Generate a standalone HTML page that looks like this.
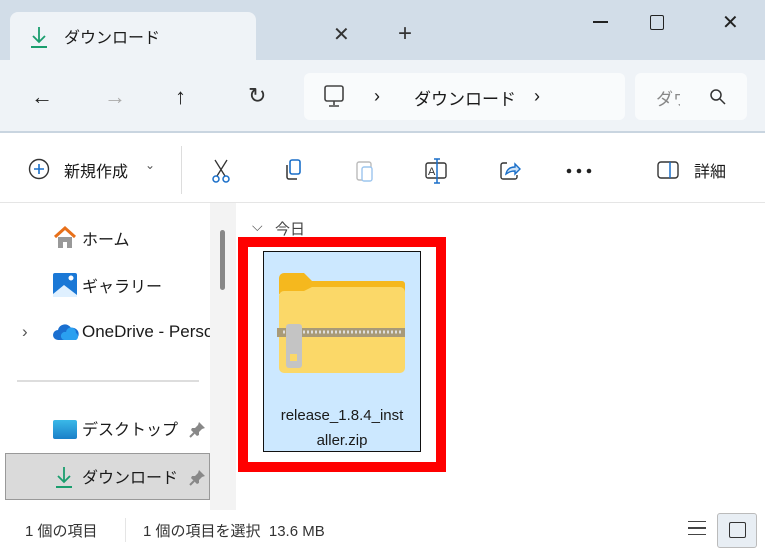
<!DOCTYPE html><html><head><meta charset="utf-8"><style>
*{margin:0;padding:0;box-sizing:border-box}
body{width:765px;height:552px;overflow:hidden;font-family:"Liberation Sans","Noto Sans CJK JP",sans-serif;color:#1a1a1a;background:#fff;position:relative}
.a{position:absolute;white-space:nowrap}
</style></head><body>
<div class="a" style="left:0;top:0;width:765px;height:60px;background:#d2dde8"></div>
<div class="a" style="left:10px;top:12px;width:246px;height:50px;background:#eff3f7;border-radius:8px 8px 0 0"></div>
<svg class="a" style="left:28px;top:24px" width="22" height="26"><path d="M11 3v15M5 12l6 6 6-6" stroke="#1a9e6e" stroke-width="1.8" fill="none"/><path d="M3 23h16" stroke="#1a9e6e" stroke-width="2"/></svg>
<div class="a" style="left:64px;top:24px;font-size:16px">ダウンロード</div>
<div class="a" style="left:333px;top:22px;font-size:20px;color:#333">✕</div>
<div class="a" style="left:398px;top:20px;font-size:24px;color:#333">+</div>
<div class="a" style="left:593px;top:21px;width:15px;height:1.5px;background:#222"></div>
<div class="a" style="left:650px;top:15px;width:14px;height:15px;border:1.5px solid #222;border-radius:2px"></div>
<div class="a" style="left:722px;top:10px;font-size:20px;color:#222">✕</div>
<div class="a" style="left:0;top:60px;width:765px;height:72px;background:#eff3f7"></div>
<div class="a" style="left:0;top:131px;width:765px;height:2px;background:#c9d5e0"></div>
<div class="a" style="left:31px;top:84px;font-size:22px;color:#222">←</div>
<div class="a" style="left:104px;top:84px;font-size:22px;color:#aaa">→</div>
<div class="a" style="left:175px;top:84px;font-size:22px;color:#222">↑</div>
<div class="a" style="left:248px;top:83px;font-size:22px;color:#333">↻</div>
<div class="a" style="left:304px;top:73px;width:321px;height:47px;background:#f9fbfc;border-radius:6px"></div>
<svg class="a" style="left:322px;top:84px" width="26" height="26"><rect x="3" y="2" width="18" height="15" rx="2" stroke="#444" stroke-width="1.6" fill="none"/><path d="M12 17v4M7 22h10" stroke="#444" stroke-width="1.6"/></svg>
<div class="a" style="left:374px;top:86px;font-size:18px">›</div>
<div class="a" style="left:414px;top:85px;font-size:17px">ダウンロード</div>
<div class="a" style="left:534px;top:86px;font-size:18px">›</div>
<div class="a" style="left:635px;top:73px;width:112px;height:47px;background:#f9fbfc;border-radius:6px"></div>
<div class="a" style="left:656px;top:85px;font-size:17px;color:#888;width:24px;overflow:hidden">ダウ</div>
<svg class="a" style="left:709px;top:88px" width="18" height="18"><circle cx="7" cy="7" r="5" stroke="#333" stroke-width="1.5" fill="none"/><path d="M11 11l5 5" stroke="#333" stroke-width="1.5"/></svg>
<svg class="a" style="left:28px;top:158px" width="24" height="24"><circle cx="11" cy="11" r="9.5" stroke="#333" stroke-width="1.4" fill="none"/><path d="M11 6v10M6 11h10" stroke="#1a6fc9" stroke-width="1.6"/></svg>
<div class="a" style="left:64px;top:158px;font-size:16px">新規作成</div>
<div class="a" style="left:145px;top:158px;font-size:12px;color:#555">⌄</div>
<div class="a" style="left:181px;top:146px;width:1px;height:48px;background:#ddd"></div>
<svg class="a" style="left:209px;top:158px" width="26" height="26"><path d="M6 2l10 16M18 2L8 18" stroke="#333" stroke-width="1.3"/><circle cx="7" cy="21" r="3" stroke="#1a6fc9" stroke-width="1.5" fill="none"/><circle cx="17" cy="21" r="3" stroke="#1a6fc9" stroke-width="1.5" fill="none"/></svg>
<svg class="a" style="left:282px;top:158px" width="24" height="24"><rect x="8" y="2" width="10" height="14" rx="2" stroke="#1a6fc9" stroke-width="1.6" fill="none"/><path d="M5 7v12a2 2 0 0 0 2 2h8" stroke="#333" stroke-width="1.5" fill="none"/></svg>
<svg class="a" style="left:354px;top:158px" width="24" height="26"><rect x="3" y="4" width="14" height="18" rx="2" stroke="#bbb" stroke-width="1.4" fill="none"/><rect x="8" y="9" width="10" height="14" rx="2" stroke="#9cc5ee" stroke-width="1.4" fill="#fff"/></svg>
<svg class="a" style="left:424px;top:157px" width="26" height="28"><rect x="2" y="6" width="20" height="15" rx="2" stroke="#333" stroke-width="1.4" fill="none"/><path d="M13 2v24M10 2h6M10 26h6" stroke="#1a6fc9" stroke-width="1.5"/><text x="4" y="18" font-size="11" fill="#333" font-family="Liberation Sans">A</text></svg>
<svg class="a" style="left:498px;top:158px" width="26" height="26"><path d="M9 5H5a2 2 0 0 0-2 2v12a2 2 0 0 0 2 2h12a2 2 0 0 0 2-2v-2" stroke="#333" stroke-width="1.4" fill="none"/><path d="M8 16c1-5 4-7 9-7V6l5 5-5 5v-3c-4 0-6 1-9 3z" stroke="#1a6fc9" stroke-width="1.4" fill="#cfe3f7"/></svg>
<svg class="a" style="left:566px;top:168px" width="28" height="6"><circle cx="3" cy="3" r="2.3" fill="#222"/><circle cx="13" cy="3" r="2.3" fill="#222"/><circle cx="23" cy="3" r="2.3" fill="#222"/></svg>
<svg class="a" style="left:656px;top:160px" width="26" height="20"><rect x="2" y="2" width="20" height="16" rx="3" stroke="#333" stroke-width="1.4" fill="none"/><path d="M14 2v16" stroke="#1a6fc9" stroke-width="1.5"/></svg>
<div class="a" style="left:694px;top:158px;font-size:16px">詳細</div>
<div class="a" style="left:0;top:202px;width:765px;height:1px;background:#e5e5e5"></div>
<div class="a" style="left:210px;top:203px;width:26px;height:307px;background:#f3f3f3"></div>
<div class="a" style="left:220px;top:230px;width:5px;height:60px;background:#888;border-radius:3px"></div>
<svg class="a" style="left:52px;top:225px" width="26" height="26"><path d="M3 12L13 3l10 9" stroke="#e8701a" stroke-width="3" fill="none"/><path d="M6 12v11h5v-6h4v6h5V12" fill="#999"/></svg>
<div class="a" style="left:82px;top:226px;font-size:16px">ホーム</div>
<svg class="a" style="left:52px;top:272px" width="26" height="26"><rect x="1" y="1" width="24" height="24" rx="2" fill="#1a78d6"/><path d="M1 22l11-9 13 10v2H1z" fill="#dff0ff"/><circle cx="19" cy="6" r="2.5" fill="#fff"/></svg>
<div class="a" style="left:82px;top:273px;font-size:16px">ギャラリー</div>
<div class="a" style="left:22px;top:322px;font-size:17px;color:#555">›</div>
<svg class="a" style="left:52px;top:320px" width="28" height="22"><path d="M6 20a5 5 0 0 1 0-10 7 7 0 0 1 13-2 6 6 0 0 1 3 12z" fill="#1a6fd0"/><path d="M12 20a4 4 0 0 1 2-8 5 5 0 0 1 10 1 4 4 0 0 1 0 7z" fill="#2aa0f0"/></svg>
<div class="a" style="left:82px;top:322px;font-size:17px;width:128px;overflow:hidden">OneDrive - Personal</div>
<div class="a" style="left:17px;top:380px;width:182px;height:2px;background:#ddd"></div>
<div class="a" style="left:53px;top:420px;width:24px;height:19px;background:linear-gradient(#3ab8e8,#1a7fc8);border-radius:2px"></div>
<div class="a" style="left:82px;top:416px;font-size:16px">デスクトップ</div>
<svg class="a" style="left:189px;top:420px" width="18" height="18"><path d="M10 2l6 6-3 1-3 3v3l-2 1-6-6 1-2h3l3-3z" fill="#888"/><path d="M5 13l-4 4" stroke="#888" stroke-width="2"/></svg>
<div class="a" style="left:5px;top:453px;width:205px;height:47px;background:#dadada;border:1px solid #999"></div>
<svg class="a" style="left:53px;top:464px" width="22" height="26"><path d="M11 3v15M5 12l6 6 6-6" stroke="#1a9e6e" stroke-width="1.8" fill="none"/><path d="M3 23h16" stroke="#1a9e6e" stroke-width="2"/></svg>
<div class="a" style="left:82px;top:464px;font-size:16px">ダウンロード</div>
<svg class="a" style="left:189px;top:468px" width="18" height="18"><path d="M10 2l6 6-3 1-3 3v3l-2 1-6-6 1-2h3l3-3z" fill="#888"/><path d="M5 13l-4 4" stroke="#888" stroke-width="2"/></svg>
<div class="a" style="left:252px;top:218px;font-size:14px;color:#555">⌵</div>
<div class="a" style="left:275px;top:218px;font-size:15px;color:#444">今日</div>
<div class="a" style="left:238px;top:237px;width:208px;height:235px;border:10px solid #f00;background:#fff"></div>
<div class="a" style="left:263px;top:251px;width:158px;height:201px;background:#cce8ff;border:1px solid #111"></div>
<svg class="a" style="left:277px;top:272px" width="130" height="102"><path d="M2 6a5 5 0 0 1 5-5h20l8 8h90a3 3 0 0 1 3 3v10H2z" fill="#f5b81e"/><path d="M2 24a5 5 0 0 1 5-5h20l8-4h88a5 5 0 0 1 5 5v76a5 5 0 0 1-5 5H7a5 5 0 0 1-5-5z" fill="#fbd868"/><rect x="0" y="56" width="128" height="9" fill="#a89a78"/><path d="M6 60h120" stroke="#ddd" stroke-width="3" stroke-dasharray="2 2"/><rect x="9" y="52" width="16" height="44" rx="3" fill="#c4c4c4"/><rect x="13" y="82" width="7" height="7" fill="#fbd868"/></svg>
<div class="a" style="left:263px;top:403px;width:158px;text-align:center;font-size:15px;line-height:25px">release_1.8.4_inst<br>aller.zip</div>
<div class="a" style="left:25px;top:520px;font-size:15px;color:#333">1 個の項目</div>
<div class="a" style="left:125px;top:518px;width:1px;height:24px;background:#e5e5e5"></div>
<div class="a" style="left:143px;top:520px;font-size:15px;color:#333">1 個の項目を選択&nbsp; 13.6 MB</div>
<div class="a" style="left:688px;top:521px;width:18px;height:14px;border-top:1.5px solid #444;border-bottom:1.5px solid #444"></div>
<div class="a" style="left:688px;top:527px;width:18px;height:1.5px;background:#444"></div>
<div class="a" style="left:717px;top:513px;width:40px;height:35px;background:#e8eef4;border:1px solid #bbb;border-radius:3px"></div>
<div class="a" style="left:729px;top:522px;width:17px;height:16px;border:1.5px solid #333;border-radius:2px"></div>
</body></html>
